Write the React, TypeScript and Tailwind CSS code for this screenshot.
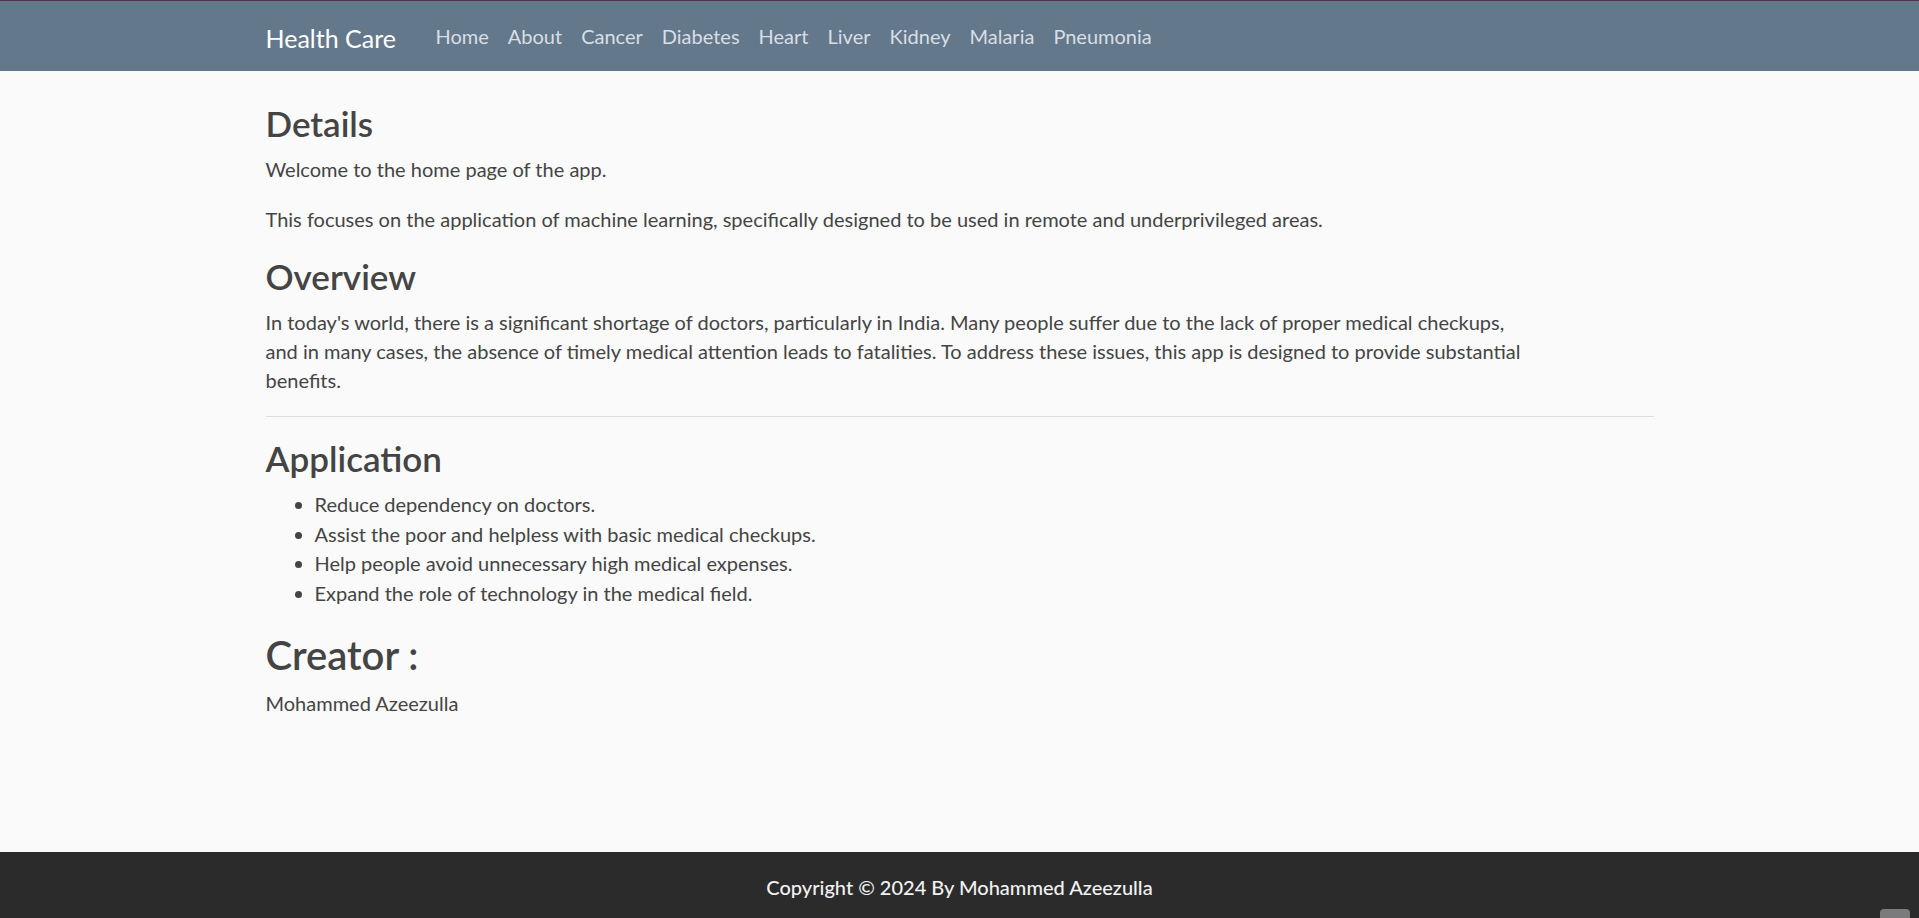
import React from "react";

const NAV_LINKS = ["Home", "About", "Cancer", "Diabetes", "Heart", "Liver", "Kidney", "Malaria", "Pneumonia"];

const APPLICATION_POINTS = [
  "Reduce dependency on doctors.",
  "Assist the poor and helpless with basic medical checkups.",
  "Help people avoid unnecessary high medical expenses.",
  "Expand the role of technology in the medical field.",
];

const FONT = "font-['Lato','Open_Sans','Noto_Sans',sans-serif]";

export default function App() {
  return (
    <div className={`min-h-screen flex flex-col bg-[#fafafa] text-[#444] ${FONT}`}>
      {/* Navbar */}
      <nav className="h-[71px] bg-[#64788b] border-t border-[#4d3350]">
        <div className="w-[1388px] mx-auto h-full flex items-center pt-[4px]">
          <a className="text-[25px] text-white mr-[30px] leading-none">Health Care</a>
          <ul className="flex items-center">
            {NAV_LINKS.map((link) => (
              <li key={link}>
                <a className="px-[9.5px] text-[20px] text-[#d9dee4] leading-none">{link}</a>
              </li>
            ))}
          </ul>
        </div>
      </nav>

      {/* Content */}
      <main className="flex-1">
        <div className="w-[1388px] mx-auto pt-[31px]">
          <h2 className="text-[35px] font-semibold leading-[42px] mb-[11px]">Details</h2>
          <p className="text-[20px] leading-[29px] mb-[21px]">Welcome to the home page of the app.</p>
          <p className="text-[20px] leading-[29px] mb-[21px]">
            This focuses on the application of machine learning, specifically designed to be used in remote and
            underprivileged areas.
          </p>

          <h2 className="text-[35px] font-semibold leading-[42px] mb-[11px]">Overview</h2>
          <p className="text-[20px] leading-[29px] max-w-[1268px]">
            In today's world, there is a significant shortage of doctors, particularly in India. Many people suffer due
            to the lack of proper medical checkups, and in many cases, the absence of timely medical attention leads to
            fatalities. To address these issues, this app is designed to provide substantial benefits.
          </p>

          <hr className="mt-[21px] mb-[20px] border-0 border-t border-[#dedede]" />

          <h2 className="text-[35px] font-semibold leading-[42px] mb-[11px]">Application</h2>
          <ul className="list-disc pl-[49px] text-[20px] leading-[29.7px]">
            {APPLICATION_POINTS.map((point) => (
              <li key={point}>{point}</li>
            ))}
          </ul>

          <h1 className="mt-[22px] text-[40px] font-semibold leading-[48px] mb-[10px]">Creator :</h1>
          <p className="text-[20px] leading-[29px]">Mohammed Azeezulla</p>
        </div>
      </main>

      {/* Footer */}
      <footer className="h-[66px] bg-[#2b2b2b] flex items-center justify-center pt-[4px]">
        <p className="text-[20px] font-medium text-[#f2f2f2] leading-none">Copyright © 2024 By Mohammed Azeezulla</p>
      </footer>

      <button className="fixed bottom-0 right-[9px] w-[30px] h-[9px] rounded-t-[4px] bg-[#7b7b7d]" />
    </div>
  );
}
